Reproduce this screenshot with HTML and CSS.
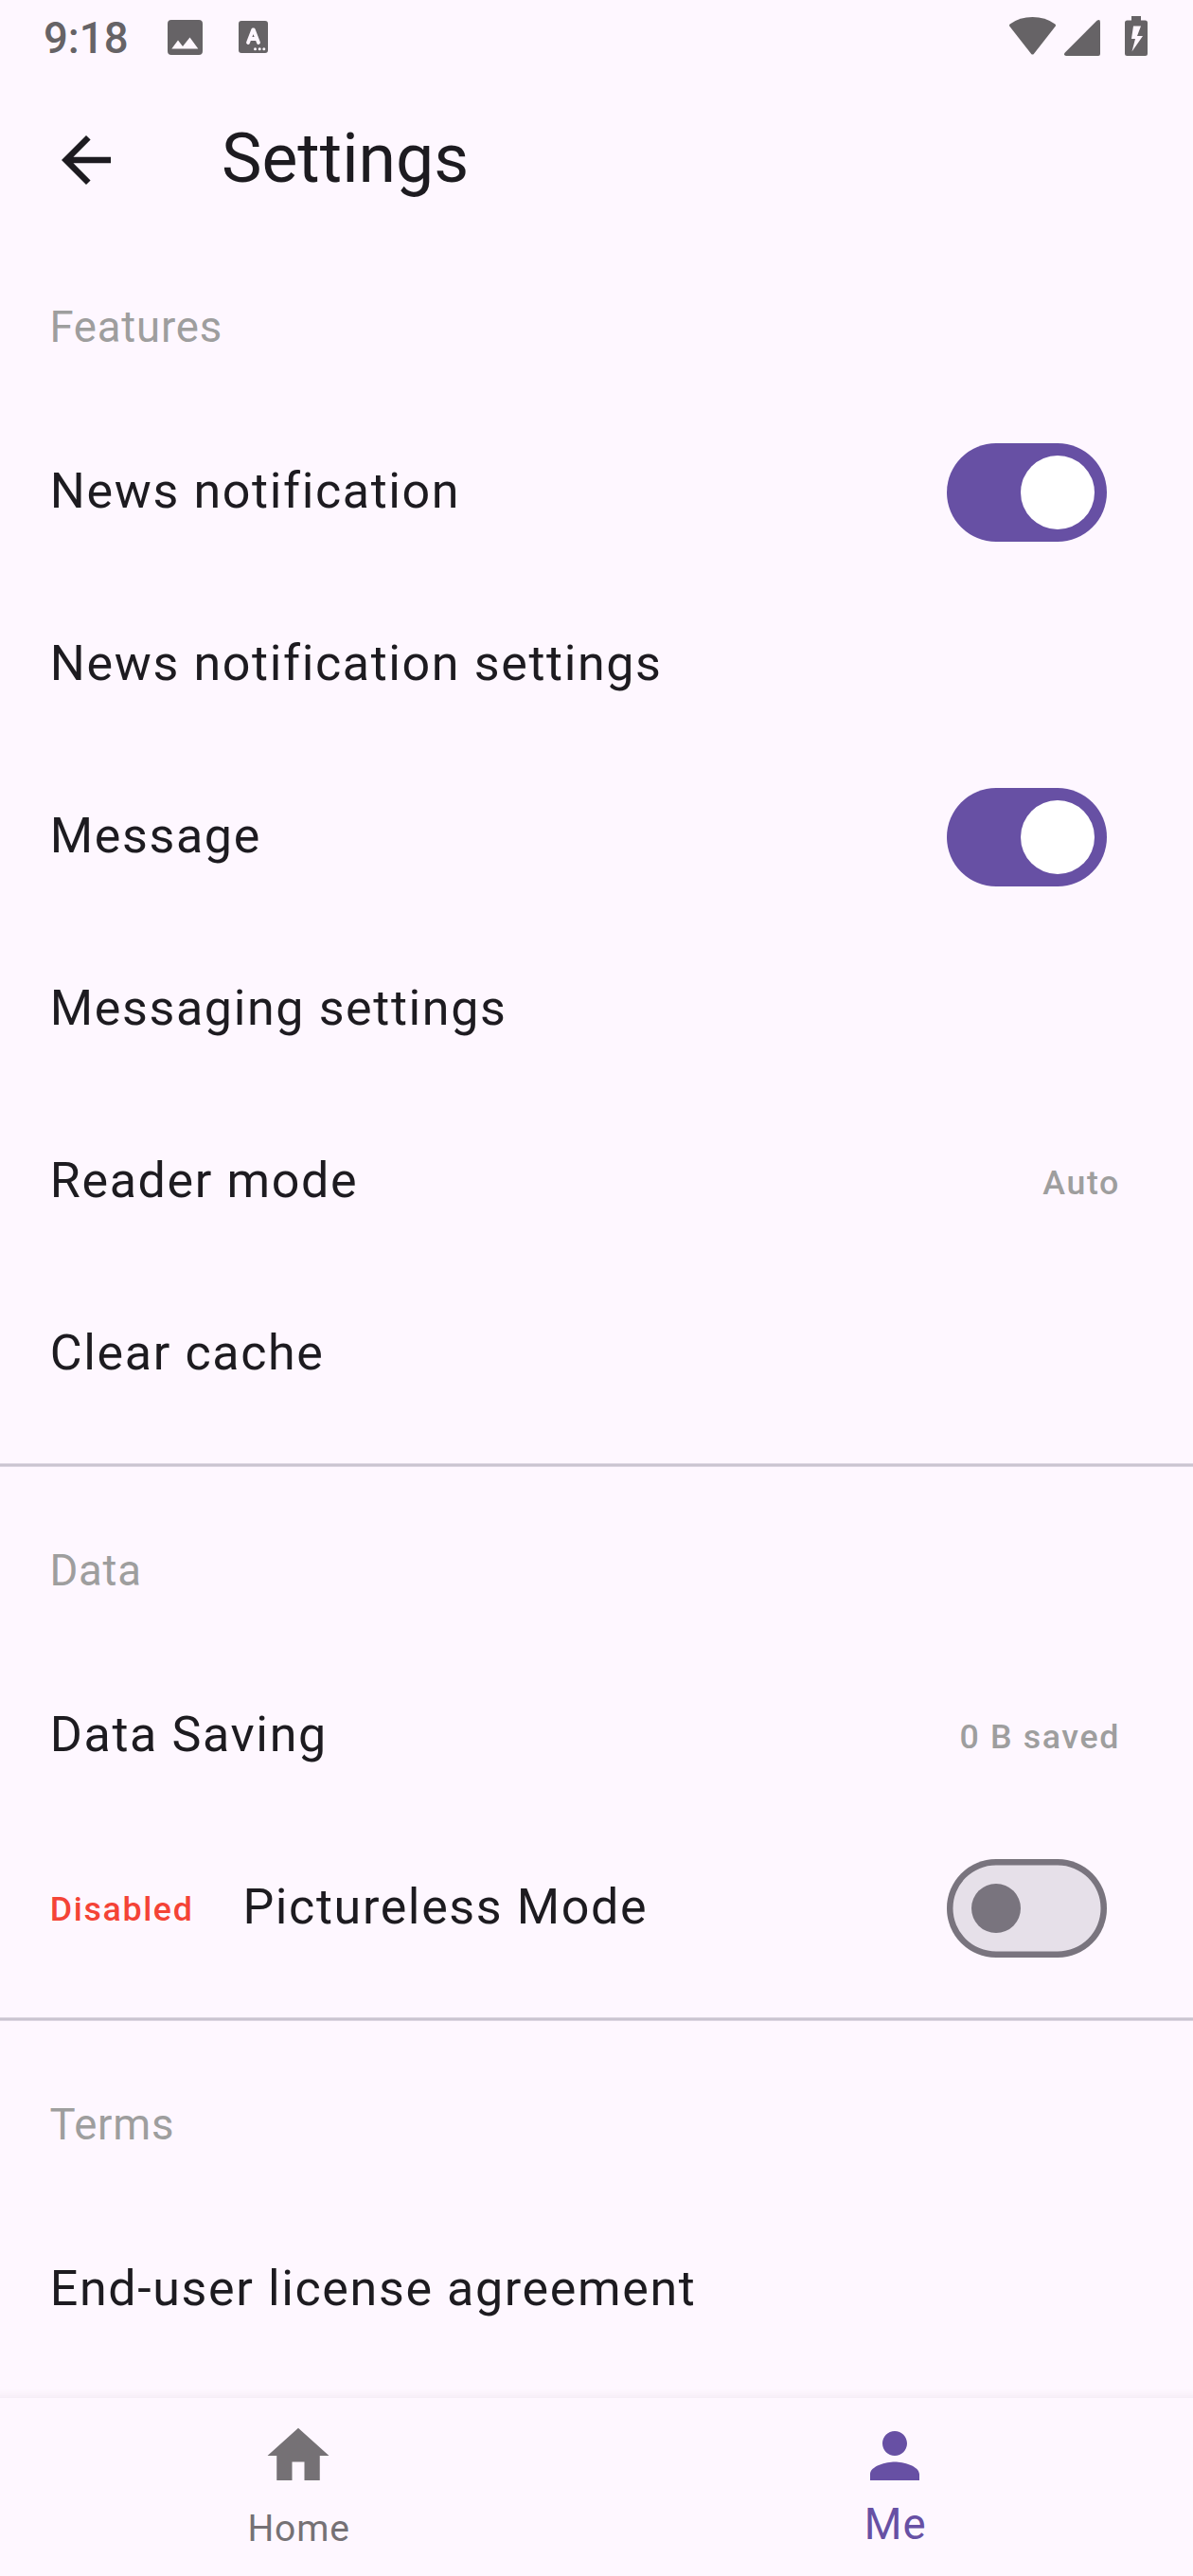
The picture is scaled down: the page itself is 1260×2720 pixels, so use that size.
FILE: index.html
```html
<!DOCTYPE html>
<html lang="en">
<head>
<meta charset="utf-8">
<title>Settings</title>
<link rel="stylesheet" href="styles.css">
</head>
<body>
<div class="screen">
  <div class="status-bar">
    <span class="clock">9:18</span>
    <svg class="icon-image" viewBox="0 0 37 37"><path fill-rule="evenodd" d="M4 0h29a4 4 0 0 1 4 4v29a4 4 0 0 1-4 4H4a4 4 0 0 1-4-4V4a4 4 0 0 1 4-4zM4.300 30.500h28L23.500 18.500l-7.500 9.500L11 21.500z"/></svg>
    <svg class="icon-input" viewBox="0 0 31 34"><path d="M3 0h25a3 3 0 0 1 3 3v28a3 3 0 0 1-3 3H3a3 3 0 0 1-3-3V3a3 3 0 0 1 3-3z"/><path class="input-mark" d="M10 23L15.200 9.500h.6L21 23M12 19h7"/><g class="input-dots"><circle cx="17.500" cy="29.700" r="1.500"/><circle cx="22.200" cy="29.700" r="1.500"/><circle cx="26.800" cy="29.700" r="1.500"/></g></svg>
    <span class="spacer"></span>
    <svg class="icon-wifi" viewBox="0 0 49 40"><path d="M.6 7.400Q11 0 24.500 0T48.400 7.400Q49.500 8.500 48.500 10L26 38.700q-1.500 1.700-3 0L.5 10Q-.5 8.500.6 7.400z"/></svg>
    <svg class="icon-signal" viewBox="0 0 38 38"><path d="M34.500.8Q38-1.200 38 2.500V36q0 2-2 2H2Q-1.200 37.500.6 34.800z"/></svg>
    <svg class="icon-battery" viewBox="0 0 24 42"><path fill-rule="evenodd" d="M7 0h10v4.500h4.500Q24 4.500 24 7v32.500q0 2.500-2.500 2.500h-19Q0 42 0 39.500V7q0-2.500 2.500-2.500H7zM9 10.500L7 24h4L7.500 37.500 19 21h-6l4-10.500z"/></svg>
  </div>

  <header class="app-bar">
    <svg class="icon" viewBox="0 0 24 24"><path d="M20 11H7.830l5.590-5.590L12 4l-8 8 8 8 1.410-1.410L7.830 13H20z"/></svg>
    <h1 class="title">Settings</h1>
  </header>

  <main class="content">
    <section class="group">
      <h2 class="group-title">Features</h2>
      <div class="row"><span class="label">News notification</span><span class="switch on"></span></div>
      <div class="row"><span class="label">News notification settings</span></div>
      <div class="row"><span class="label">Message</span><span class="switch on"></span></div>
      <div class="row"><span class="label">Messaging settings</span></div>
      <div class="row"><span class="label">Reader mode</span><span class="value">Auto</span></div>
      <div class="row"><span class="label">Clear cache</span></div>
    </section>
    <div class="divider"></div>
    <section class="group">
      <h2 class="group-title">Data</h2>
      <div class="row"><span class="label">Data Saving</span><span class="value">0 B saved</span></div>
      <div class="row"><span class="tag">Disabled</span><span class="label">Pictureless Mode</span><span class="switch"></span></div>
    </section>
    <div class="divider"></div>
    <section class="group">
      <h2 class="group-title">Terms</h2>
      <div class="row"><span class="label">End-user license agreement</span></div>
    </section>
  </main>

  <nav class="bottom-nav">
    <div class="tab">
      <svg class="icon" viewBox="0 0 24 24"><path d="M10 20v-6h4v6h5v-8h3L12 3 2 12h3v8z"/></svg>
      <span class="tab-label">Home</span>
    </div>
    <div class="tab active">
      <svg class="icon" viewBox="0 0 24 24"><path d="M12 12c2.210 0 4-1.790 4-4s-1.790-4-4-4-4 1.790-4 4 1.790 4 4 4zm0 2c-2.670 0-8 1.340-8 4v2h16v-2c0-2.660-5.330-4-8-4z"/></svg>
      <span class="tab-label">Me</span>
    </div>
  </nav>
</div>
</body>
</html>
```
FILE: styles.css
```css
* { box-sizing: border-box; }
body { margin: 0; background: #fef7ff; color: #1d1b20; font-family: Roboto, "Liberation Sans", sans-serif; }
svg { display: block; flex: none; fill: currentColor; }
.screen { width: 1260px; height: 2720px; display: flex; flex-direction: column; overflow: hidden; }

.status-bar { height: 65px; flex: none; display: flex; align-items: flex-start; padding: 0 48px 0 46px; color: #666366; }
.clock { width: 131px; font-size: 45.5px; font-weight: 500; line-height: 54px; padding-top: 14px; }
.icon-image { width: 37px; height: 37px; margin-top: 20.5px; }
.icon-input { width: 31px; height: 34px; margin: 22px 0 0 37.5px; }
.input-mark { fill: none; stroke: #fef7ff; stroke-width: 3.8; stroke-linecap: round; stroke-linejoin: round; }
.input-dots { fill: #fef7ff; }
.spacer { flex: 1; }
.icon-wifi { width: 49px; height: 40px; margin-top: 18px; }
.icon-signal { width: 38px; height: 38px; margin: 21px 26px 0 9px; }
.icon-battery { width: 24px; height: 42px; margin-top: 17px; }

.app-bar { height: 195px; flex: none; display: flex; align-items: flex-start; padding: 65px 52px 0; }
.icon { width: 78px; height: 78px; }
.title { margin: -8px 0 0 104px; font-size: 71.5px; font-weight: 400; line-height: 91px; }

.content { flex: 1; min-height: 0; overflow: hidden; }
.group-title { margin: 0; height: 169px; padding: 53px 52.4px 0; font-size: 45.5px; font-weight: 400; line-height: 65px; letter-spacing: 0.8px; color: #9e9e9e; }
.row { height: 182px; padding: 0 77px 0 52.8px; display: flex; align-items: center; }
.label { flex: 1; font-size: 52px; line-height: 78px; letter-spacing: 1.625px; margin-top: -2px; }
.value, .tag { font-size: 35.75px; font-weight: 500; line-height: 52px; letter-spacing: 1.625px; margin-top: 2px; }
.value { color: #9e9e9e; }
.tag { color: #f44336; margin-right: 52px; }
.switch { width: 169px; height: 104px; margin-right: 14px; padding: 0 26px; border-radius: 52px; background: #e6e0e9; box-shadow: inset 0 0 0 6.5px #79747e; display: flex; align-items: center; }
.switch::before { content: ""; width: 52px; height: 52px; border-radius: 50%; background: #79747e; }
.switch.on { background: #6750a4; box-shadow: none; padding: 0 13px; justify-content: flex-end; }
.switch.on::before { width: 78px; height: 78px; background: #fff; }
.divider { height: 52px; padding-top: 24px; }
.divider::before { content: ""; display: block; height: 4px; background: linear-gradient(#dcd5e1 0 1px, #cac4d0 1px 3px, #dcd5e1 3px); }

.bottom-nav { height: 188px; flex: none; display: flex; position: relative; background: #fef7ff; box-shadow: 0 6px 8px 8px rgba(80, 60, 80, 0.07); }
.tab { flex: 1; display: flex; flex-direction: column; align-items: center; padding-top: 22px; color: #757175; }
.tab-label { font-size: 39px; line-height: 52px; letter-spacing: 0.9px; margin: 12px 0 0 1.3px; }
.tab.active { color: #6750a4; }
.active .tab-label { font-size: 45.5px; margin-top: 8px; }
```
